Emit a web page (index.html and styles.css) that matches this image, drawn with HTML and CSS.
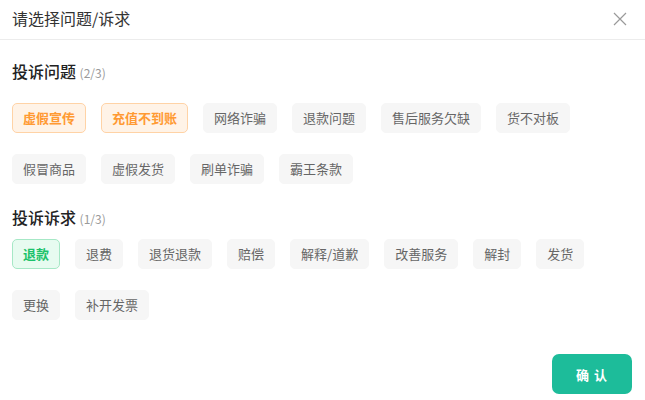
FILE: index.html
```html
<!DOCTYPE html>
<html lang="zh-CN">
<head>
<meta charset="utf-8">
<link rel="stylesheet" href="styles.css">
</head>
<body>
<div class="dialog">
  <div class="header">
    <div class="title">请选择问题/诉求</div>
    <svg class="close" width="14" height="14" viewBox="0 0 14 14"><path d="M1 1L13 13M13 1L1 13" stroke="#9a9a9a" stroke-width="1.2" fill="none"/></svg>
  </div>
  <div class="body">
    <div class="sec-title first">投诉问题 <span class="count">(2/3)</span></div>
    <div class="tags">
      <span class="tag orange">虚假宣传</span>
      <span class="tag orange">充值不到账</span>
      <span class="tag">网络诈骗</span>
      <span class="tag">退款问题</span>
      <span class="tag">售后服务欠缺</span>
      <span class="tag">货不对板</span>
      <span class="tag">假冒商品</span>
      <span class="tag">虚假发货</span>
      <span class="tag">刷单诈骗</span>
      <span class="tag">霸王条款</span>
    </div>
    <div class="sec-title second">投诉诉求 <span class="count">(1/3)</span></div>
    <div class="tags">
      <span class="tag green">退款</span>
      <span class="tag">退费</span>
      <span class="tag">退货退款</span>
      <span class="tag">赔偿</span>
      <span class="tag">解释/道歉</span>
      <span class="tag">改善服务</span>
      <span class="tag">解封</span>
      <span class="tag">发货</span>
      <span class="tag">更换</span>
      <span class="tag">补开发票</span>
    </div>
  </div>
  <div class="footer">
    <button class="confirm">确 认</button>
  </div>
</div>
</body>
</html>
```
FILE: styles.css
```css
* { box-sizing: border-box; }
html, body { margin: 0; padding: 0; background: #fff; }
body {
  font-family: "Noto Sans CJK SC", "Microsoft YaHei", "Noto Sans", sans-serif;
  color: #333;
  width: 645px;
  height: 400px;
  overflow: hidden;
}
.header {
  height: 40px;
  border-bottom: 1px solid #ececec;
  display: flex;
  align-items: center;
  justify-content: space-between;
  padding: 0 18px 4px 12px;
}
.title {
  font-size: 16px;
  line-height: 24px;
  color: #333;
}
.close { display: block; margin-top: 2px; }
.body {
  padding: 0 12px;
}
.sec-title {
  font-size: 16px;
  line-height: 24px;
  font-weight: 500;
  color: #222;
}
.sec-title.first { margin-top: 19px; margin-bottom: 18px; }
.sec-title.second { margin-top: 1px; margin-bottom: 8px; }
.count {
  font-size: 12px;
  font-weight: 400;
  color: #9a9a9a;
}
.tags {
  display: flex;
  flex-wrap: wrap;
  column-gap: 15px;
  row-gap: 21px;
  margin-bottom: 21px;
}
.tag {
  display: inline-block;
  height: 30px;
  line-height: 28px;
  padding: 0 10px;
  font-size: 13px;
  color: #666;
  background: #f6f6f6;
  border: 1px solid #f6f6f6;
  border-radius: 5px;
  white-space: nowrap;
}
.tag.orange {
  background: #fff3e7;
  border-color: #ffd3a6;
  color: #ff9a33;
  font-weight: 700;
}
.tag.green {
  background: #e7fbf0;
  border-color: #a6e8c6;
  color: #1cc26b;
  font-weight: 700;
}
.footer {
  display: flex;
  justify-content: flex-end;
  padding: 13px 13px 0 0;
}
.confirm {
  width: 80px;
  height: 40px;
  border: none;
  border-radius: 7px;
  background: #1dbc9a;
  color: #fff;
  font-family: inherit;
  font-size: 13px;
  font-weight: 700;
  letter-spacing: 1px;
  padding: 0;
}
```
